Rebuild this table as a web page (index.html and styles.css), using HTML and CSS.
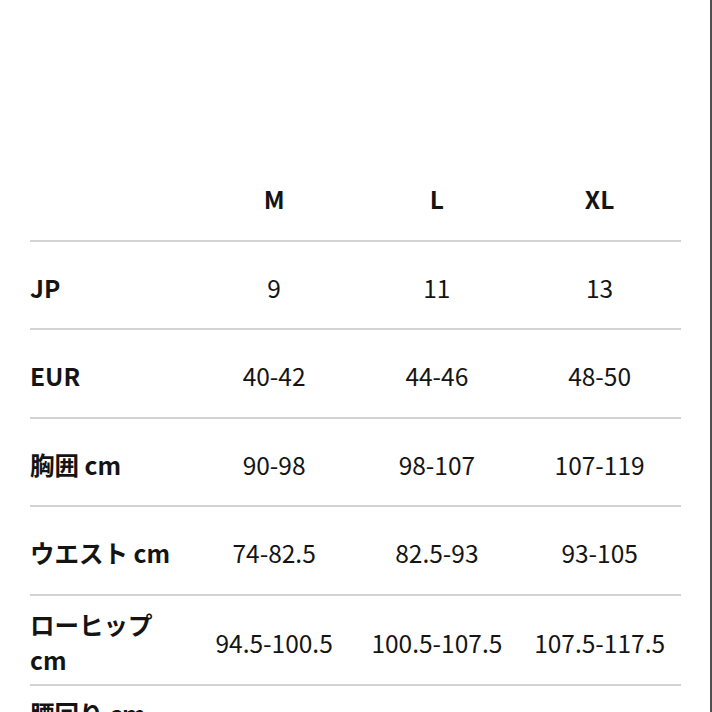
FILE: index.html
```html
<!DOCTYPE html>
<html lang="ja">
<head>
<meta charset="utf-8">
<link rel="stylesheet" href="styles.css">
</head>
<body>
<div class="page">
  <div class="size-table">
    <div class="row head">
      <div class="cell label"></div>
      <div class="cell">M</div>
      <div class="cell">L</div>
      <div class="cell">XL</div>
    </div>
    <div class="row">
      <div class="cell label">JP</div>
      <div class="cell">9</div>
      <div class="cell">11</div>
      <div class="cell">13</div>
    </div>
    <div class="row">
      <div class="cell label">EUR</div>
      <div class="cell">40-42</div>
      <div class="cell">44-46</div>
      <div class="cell">48-50</div>
    </div>
    <div class="row">
      <div class="cell label">胸囲 cm</div>
      <div class="cell">90-98</div>
      <div class="cell">98-107</div>
      <div class="cell">107-119</div>
    </div>
    <div class="row">
      <div class="cell label">ウエスト cm</div>
      <div class="cell">74-82.5</div>
      <div class="cell">82.5-93</div>
      <div class="cell">93-105</div>
    </div>
    <div class="row">
      <div class="cell label">ローヒップ cm</div>
      <div class="cell">94.5-100.5</div>
      <div class="cell">100.5-107.5</div>
      <div class="cell">107.5-117.5</div>
    </div>
    <div class="row">
      <div class="cell label top">腰回り cm</div>
      <div class="cell">&nbsp;</div>
      <div class="cell">&nbsp;</div>
      <div class="cell">&nbsp;</div>
    </div>
  </div>
</div>
</body>
</html>
```

FILE: styles.css
```css
html, body {
  margin: 0;
  padding: 0;
  background: #ffffff;
}

.page {
  box-sizing: border-box;
  width: 712px;
  height: 712px;
  overflow: hidden;
  border-right: 2px solid #4f4f4f;
  padding: 153px 0 0 30px;
  font-family: "Noto Sans CJK JP", "Noto Sans", sans-serif;
  font-size: 24.5px;
  color: #141414;
}

.size-table {
  width: 651px;
}

.row {
  display: grid;
  grid-template-columns: repeat(4, 1fr);
  align-items: center;
  min-height: 86.5px;
  border-bottom: 2px solid #d3d3d3;
}

.cell {
  padding: 11.5px 4px 7px;
  text-align: center;
}

.cell.label {
  text-align: left;
  padding-left: 0;
  padding-right: 12px;
  font-weight: 700;
}

.head .cell {
  font-weight: 700;
}

.cell.label.top {
  align-self: start;
  padding-top: 10px;
}
```
